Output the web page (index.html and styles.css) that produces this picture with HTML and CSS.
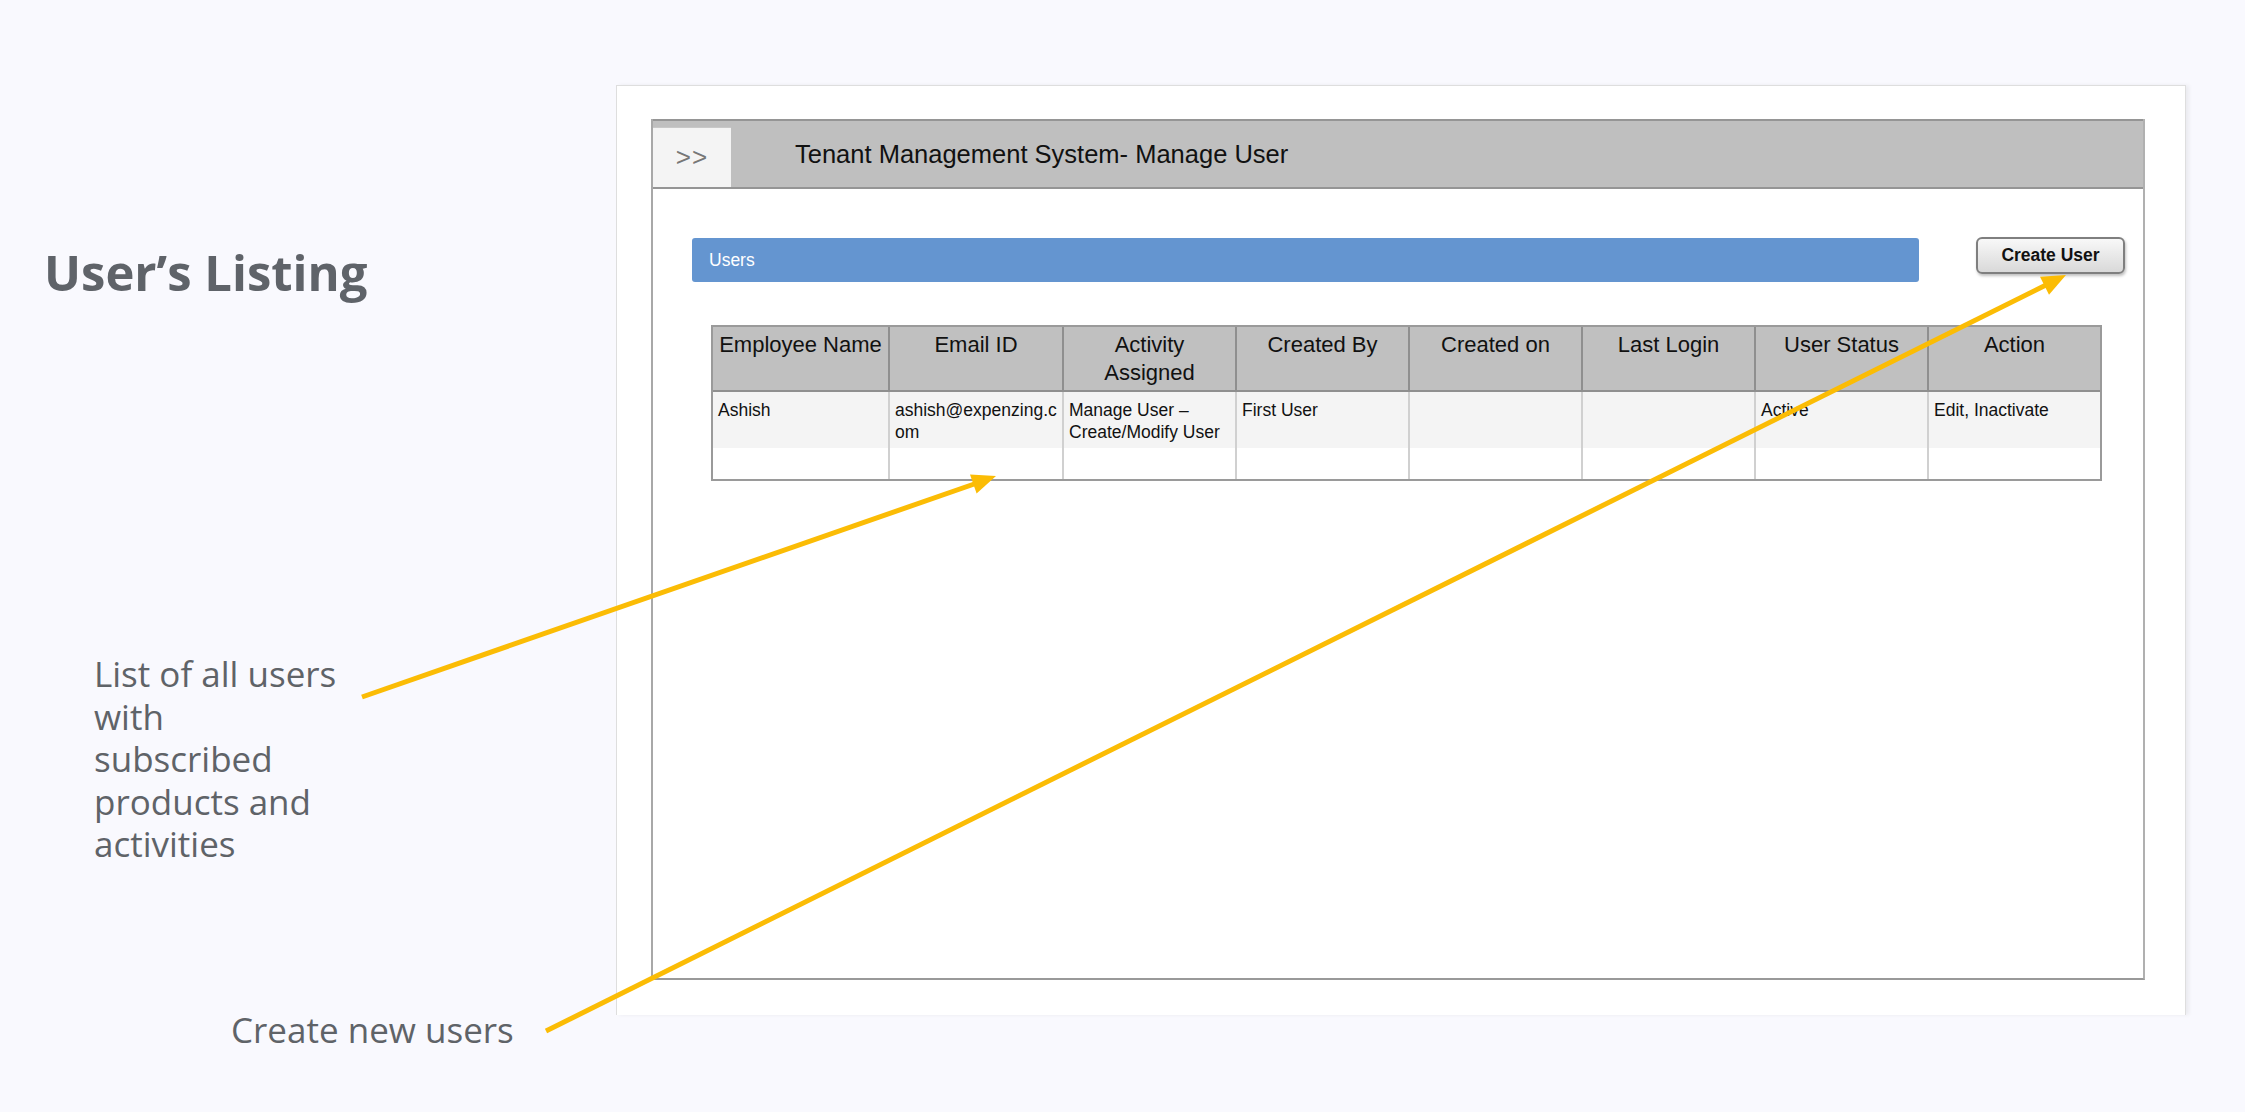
FILE: index.html
```html
<!DOCTYPE html>
<html lang="en">
<head>
<meta charset="utf-8">
<title>User's Listing</title>
<link rel="stylesheet" href="styles.css">
</head>
<body>
<div class="page">
  <div class="side">
    <h1 class="title">User’s Listing</h1>
    <p class="note note-list">List of all users<br>with<br>subscribed<br>products and<br>activities</p>
    <p class="note note-create">Create new users</p>
  </div>
  <div class="panel">
    <div class="frame">
      <div class="app-header">
        <div class="toggle">&gt;&gt;</div>
        <div class="app-title">Tenant Management System- Manage User</div>
      </div>
      <div class="toolbar">
        <div class="section-bar">Users</div>
        <button class="create-btn" type="button">Create User</button>
      </div>
      <table class="users">
        <colgroup>
          <col class="c-first">
          <col class="c-second">
          <col class="c-mid">
          <col class="c-mid">
          <col class="c-mid">
          <col class="c-mid">
          <col class="c-mid">
          <col class="c-last">
        </colgroup>
        <thead>
          <tr>
            <th>Employee Name</th>
            <th>Email ID</th>
            <th>Activity<br>Assigned</th>
            <th>Created By</th>
            <th>Created on</th>
            <th>Last Login</th>
            <th>User Status</th>
            <th>Action</th>
          </tr>
        </thead>
        <tbody>
          <tr class="data">
            <td>Ashish</td>
            <td>ashish@expenzing.com</td>
            <td>Manage User – Create/Modify User</td>
            <td>First User</td>
            <td></td>
            <td></td>
            <td>Active</td>
            <td>Edit, Inactivate</td>
          </tr>
          <tr class="blank">
            <td></td><td></td><td></td><td></td><td></td><td></td><td></td><td></td>
          </tr>
        </tbody>
      </table>
    </div>
  </div>
</div>
<svg class="arrows" width="2245" height="1112" viewBox="0 0 2245 1112" xmlns="http://www.w3.org/2000/svg">
  <line x1="362" y1="697" x2="980" y2="482" stroke="#fbbc05" stroke-width="5"/>
  <polygon points="996,476 970,474.5 976.6,493.4" fill="#fbbc05"/>
  <line x1="546" y1="1031" x2="2050" y2="283" stroke="#fbbc05" stroke-width="5"/>
  <polygon points="2066,275 2040,276.8 2049,294.7" fill="#fbbc05"/>
</svg>
</body>
</html>
```

FILE: styles.css
```css
html, body {
  margin: 0;
  padding: 0;
}
body {
  background: #f9f9fe;
  width: 2245px;
  height: 1112px;
  position: relative;
  overflow: hidden;
  font-family: "Liberation Sans", Arial, sans-serif;
}
.page {
  display: flex;
  align-items: flex-start;
}
.side {
  width: 616px;
  flex: none;
  font-family: "Open Sans", "Noto Sans", sans-serif;
  color: #5f6368;
}
.title {
  margin: 242px 0 0 44px;
  font-size: 49px;
  line-height: 60px;
  font-weight: 700;
  color: #5f6369;
}
.note {
  margin: 0;
  font-size: 35px;
  line-height: 42.5px;
  font-weight: 400;
}
.note-list {
  margin-top: 351px;
  margin-left: 94px;
}
.note-create {
  margin-top: 143px;
  margin-left: 231px;
}
.panel {
  margin-top: 85px;
  width: 1570px;
  height: 930px;
  box-sizing: border-box;
  background: #ffffff;
  border: 1px solid #dedede;
  border-bottom: none;
  box-shadow: 3px 0 4px rgba(0, 0, 0, 0.06);
  padding: 33px 0 0 34px;
}
.frame {
  width: 1494px;
  height: 861px;
  box-sizing: border-box;
  border-left: 2px solid #a8a8a8;
  border-right: 2px solid #b0b0b0;
  border-bottom: 2px solid #999999;
}
.app-header {
  display: flex;
  align-items: center;
  background: #bfbfbf;
  border-top: 2px solid #959595;
  border-bottom: 2px solid #959595;
  padding-top: 5px;
  height: 61px;
}
.toggle {
  align-self: flex-end;
  width: 78px;
  height: 60px;
  box-sizing: border-box;
  border-top: 1px solid #c8c8c8;
  background: #f4f4f4;
  color: #777777;
  font-size: 26px;
  letter-spacing: 1px;
  display: flex;
  align-items: center;
  justify-content: center;
}
.app-title {
  margin-left: 64px;
  margin-top: -4px;
  font-size: 25.5px;
  color: #111111;
}
.toolbar {
  display: flex;
  align-items: flex-start;
  margin-top: 49px;
  padding-left: 39px;
}
.section-bar {
  width: 1227px;
  height: 44px;
  box-sizing: border-box;
  background: #6495d0;
  border-radius: 3px;
  color: #ffffff;
  font-size: 17.5px;
  padding-left: 17px;
  display: flex;
  align-items: center;
}
.create-btn {
  margin-left: 57px;
  margin-top: -1px;
  width: 149px;
  height: 37px;
  box-sizing: border-box;
  border: 2px solid #7f7f7f;
  border-radius: 6px;
  background: linear-gradient(#f8f8f8, #d9d9d9);
  box-shadow: 1px 2px 3px rgba(0, 0, 0, 0.25);
  font-family: "Liberation Sans", Arial, sans-serif;
  font-weight: 700;
  font-size: 17.5px;
  color: #111111;
  padding: 0;
}
.users {
  margin-top: 43px;
  margin-left: 58px;
  width: 1391px;
  table-layout: fixed;
  border-spacing: 0;
  border: 2px solid #9a9a9a;
  color: #111111;
}
.c-first { width: 177px; }
.c-second { width: 174px; }
.c-mid { width: 173px; }
.c-last { width: 171px; }
.users th {
  background: #c0c0c0;
  font-weight: 400;
  font-size: 22px;
  line-height: 28px;
  text-align: center;
  vertical-align: top;
  padding: 4px 2px 3px;
  border-right: 2px solid #8f8f8f;
  border-bottom: 2px solid #8f8f8f;
}
.users th:last-child,
.users td:last-child {
  border-right: none;
}
.users td {
  border-right: 2px solid #d0d0d0;
  font-size: 17.5px;
  line-height: 22px;
  text-align: left;
  vertical-align: top;
  overflow-wrap: anywhere;
}
.users .data td {
  background: #f4f4f4;
  padding: 7px 2px 5px 5px;
}
.users .blank td {
  background: #ffffff;
  padding: 0;
  height: 31px;
}
.arrows {
  position: absolute;
  top: 0;
  left: 0;
  pointer-events: none;
}
```
